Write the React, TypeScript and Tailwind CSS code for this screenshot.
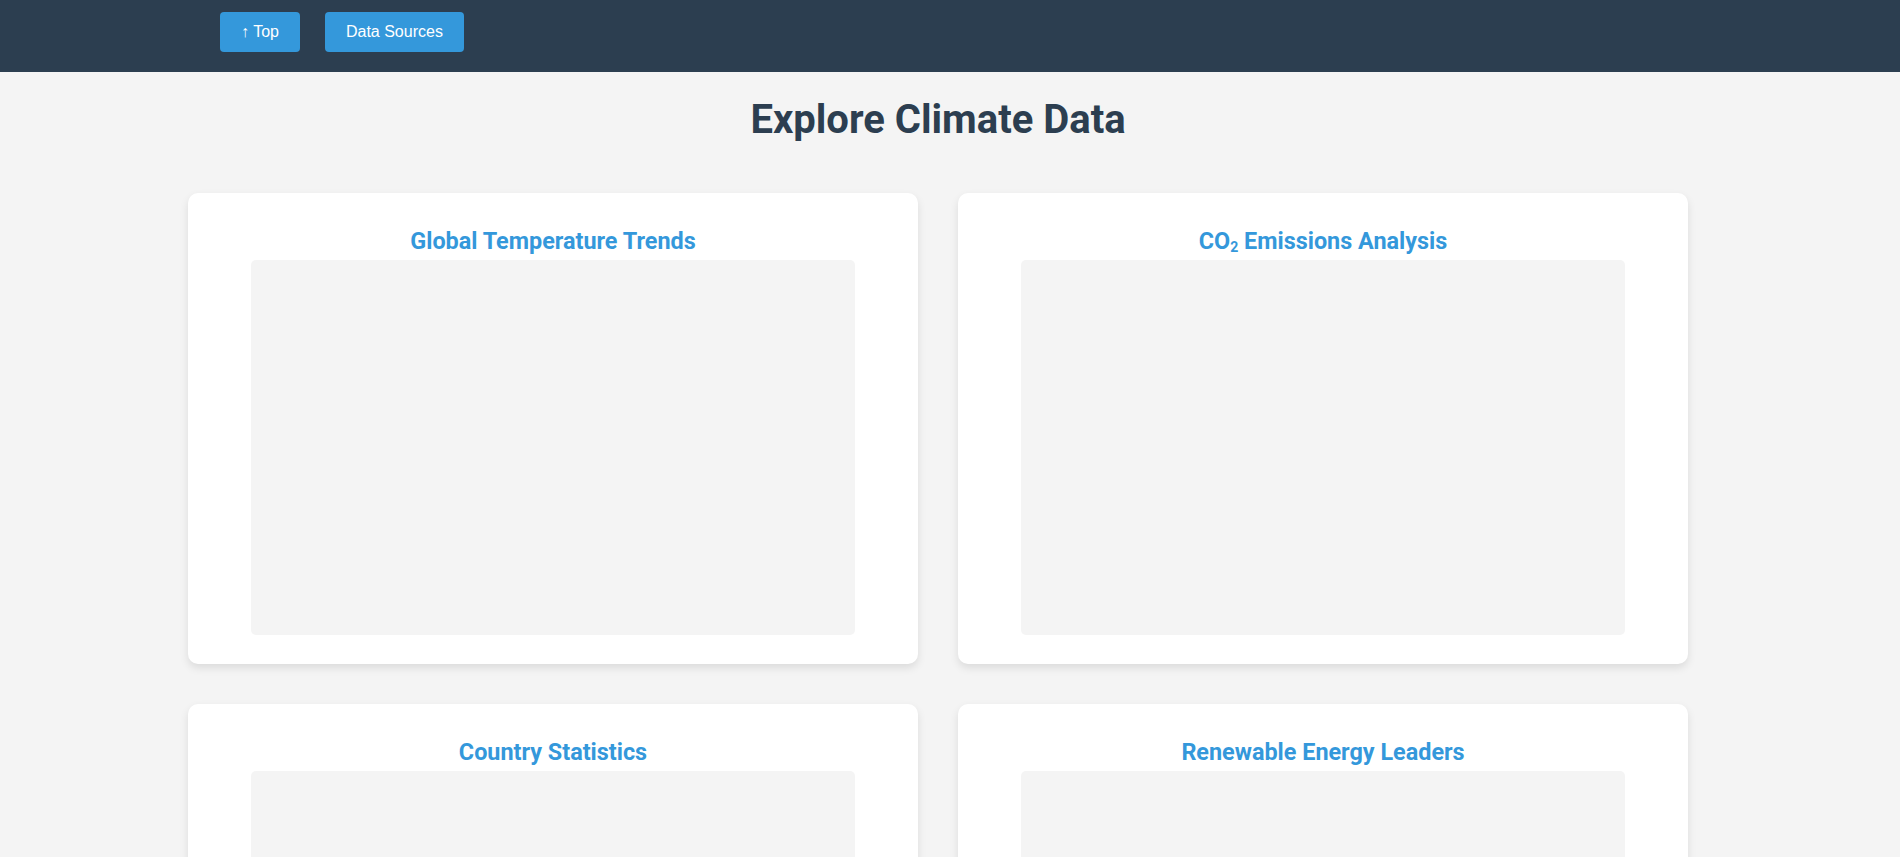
import React from "react"

type Panel = { id: string; title: React.ReactNode }

const panels: Panel[] = [
  { id: "temperature", title: "Global Temperature Trends" },
  {
    id: "co2",
    title: (
      <>
        CO<sub className="bottom-[-3px] text-[14px]">2</sub> Emissions Analysis
      </>
    )
  },
  { id: "countries", title: "Country Statistics" },
  { id: "renewables", title: "Renewable Energy Leaders" }
]

function NavButton({ children }: { children: React.ReactNode }) {
  return (
    <button className="flex h-[40px] items-center rounded-[4px] bg-[#3498db] px-[21px] text-[16px] text-white">
      {children}
    </button>
  )
}

function ChartCard({ panel }: { panel: Panel }) {
  return (
    <div className="rounded-[10px] bg-white px-[63px] pb-[29px] pt-[34px] shadow-[0_4px_8px_rgba(0,0,0,0.1)]">
      <h3 className="mb-[5px] h-[28px] text-center text-[23.4px] font-bold leading-[28px] text-[#3498db]">
        {panel.title}
      </h3>
      <div className="h-[375px] rounded-[5px] bg-[#f4f4f4]" />
    </div>
  )
}

export default function App() {
  return (
    <div className="min-h-screen bg-[#f4f4f4] font-['Roboto',sans-serif]">
      <header className="h-[72px] bg-[#2c3e50] pt-[12px]">
        <nav className="flex gap-[25px] pl-[220px] font-['Liberation_Sans',Arial,sans-serif]">
          <NavButton>↑ Top</NavButton>
          <NavButton>Data Sources</NavButton>
        </nav>
      </header>

      <main className="ml-[188px] w-[1500px] pt-[24px]">
        <h2 className="mb-[50px] text-center text-[40px] font-bold leading-[47px] text-[#2c3e50]">
          Explore Climate Data
        </h2>
        <div className="grid grid-cols-2 gap-[40px]">
          {panels.map((panel) => (
            <ChartCard key={panel.id} panel={panel} />
          ))}
        </div>
      </main>
    </div>
  )
}
